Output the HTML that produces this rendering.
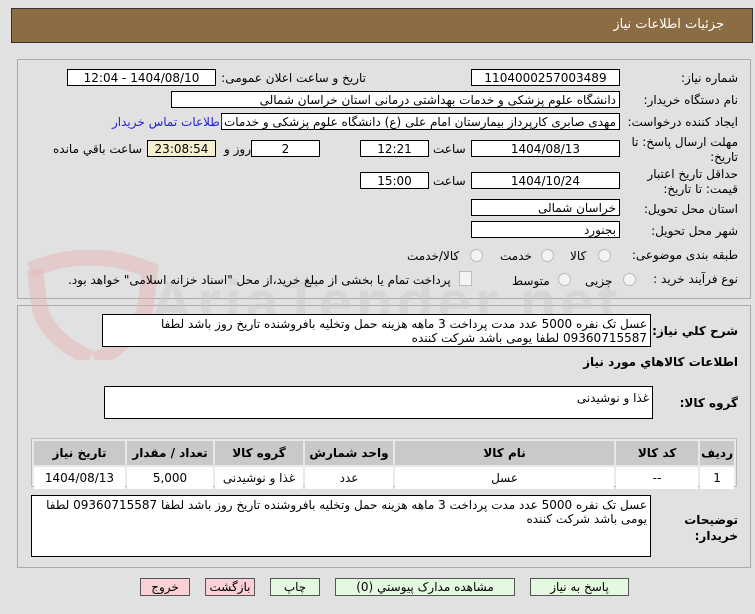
<!DOCTYPE html><html><head><meta charset="utf-8"><style>
body{margin:0;width:755px;height:614px;background:#e1e1e1;font-family:"DejaVu Sans","Liberation Sans",sans-serif;font-size:12px;color:#000;position:relative;overflow:hidden}
.a{position:absolute}
.f{position:absolute;background:#fff;border:1px solid #000;height:17px;line-height:17px;box-sizing:border-box;direction:rtl;padding:0 3px;white-space:nowrap;overflow:hidden}
.c{text-align:center}
.l{position:absolute;direction:rtl;white-space:nowrap}
.panel{position:absolute;border:1px solid #aaa;box-sizing:border-box}
.rad{position:absolute;width:11px;height:11px;border:1px solid #bbb;border-radius:50%;background:#f4f4f4}
table{border-collapse:separate;border-spacing:2px;direction:rtl}
td{text-align:center;height:20px;background:#fff}
th{background:#c9c9c9;height:22px;font-weight:bold}
.btn{position:absolute;height:18px;border:1px solid #555;box-sizing:border-box;text-align:center;line-height:16px;font-size:12px;direction:rtl}
</style></head><body>
<div class="a" style="left:11px;top:8px;width:742px;height:35px;background:#8c6c43;border:1px solid #333;box-sizing:border-box"></div>
<div class="l" style="right:31px;top:17px;color:#fff;font-size:13px">جزئیات اطلاعات نیاز</div>

<div class="panel" style="left:17px;top:59px;width:734px;height:240px"></div>
<div class="panel" style="left:17px;top:305px;width:734px;height:263px"></div>

<!-- watermark -->
<svg class="a" style="left:20px;top:250px" width="140" height="110" viewBox="0 0 140 110"><path d="M10 20 Q70 -5 130 20 L125 60 Q110 95 75 110" fill="none" stroke="#e6b5b5" stroke-width="16" opacity=".5"/><path d="M15 20 L20 60 Q30 90 70 108" fill="none" stroke="#e6b5b5" stroke-width="16" opacity=".5"/></svg>
<div class="a" style="left:150px;top:268px;font-size:60px;font-weight:bold;color:#c9c9c9;opacity:.45;letter-spacing:4px;font-family:'Liberation Sans',sans-serif;line-height:70px">AriaTender.net</div>

<div class="l" style="right:17px;top:71px">شماره نیاز:</div>
<div class="f c" style="left:471px;top:69px;width:149px">1104000257003489</div>
<div class="l" style="right:389px;top:71px">تاریخ و ساعت اعلان عمومی:</div>
<div class="f c" style="left:67px;top:69px;width:149px">1404/08/10 - 12:04</div>

<div class="l" style="right:17px;top:93px">نام دستگاه خریدار:</div>
<div class="f" style="left:171px;top:91px;width:449px">دانشگاه علوم پزشکی و خدمات بهداشتی درمانی استان خراسان شمالی</div>

<div class="l" style="right:17px;top:115px">ایجاد کننده درخواست:</div>
<div class="f" style="left:221px;top:113px;width:399px">مهدی صابری کارپرداز بیمارستان امام علی (ع) دانشگاه علوم پزشکی و خدمات بهداشتی</div>
<div class="l" style="left:112px;top:115px;color:#2323d0">اطلاعات تماس خریدار</div>

<div class="l" style="right:17px;top:135px;line-height:15px;text-align:right">مهلت ارسال پاسخ: تا<br>تاریخ:</div>
<div class="f c" style="left:471px;top:140px;width:149px">1404/08/13</div>
<div class="l" style="left:433px;top:142px">ساعت</div>
<div class="f c" style="left:360px;top:140px;width:69px">12:21</div>
<div class="f c" style="left:251px;top:140px;width:69px">2</div>
<div class="l" style="left:224px;top:142px">روز و</div>
<div class="f c" style="left:147px;top:140px;width:69px;background:#f5f0cf">23:08:54</div>
<div class="l" style="left:53px;top:142px">ساعت باقي مانده</div>

<div class="l" style="right:17px;top:167px;line-height:15px;text-align:right">حداقل تاریخ اعتبار<br>قیمت: تا تاریخ:</div>
<div class="f c" style="left:471px;top:172px;width:149px">1404/10/24</div>
<div class="l" style="left:433px;top:174px">ساعت</div>
<div class="f c" style="left:360px;top:172px;width:69px">15:00</div>

<div class="l" style="right:17px;top:202px">استان محل تحویل:</div>
<div class="f" style="left:471px;top:199px;width:149px">خراسان شمالی</div>
<div class="l" style="right:17px;top:224px">شهر محل تحویل:</div>
<div class="f" style="left:471px;top:221px;width:149px">بجنورد</div>

<div class="l" style="right:17px;top:248px">طبقه بندی موضوعی:</div>
<div class="rad" style="left:598px;top:249px"></div><div class="l" style="left:570px;top:249px">کالا</div>
<div class="rad" style="left:541px;top:249px"></div><div class="l" style="left:500px;top:249px">خدمت</div>
<div class="rad" style="left:470px;top:249px"></div><div class="l" style="left:407px;top:249px">کالا/خدمت</div>

<div class="l" style="right:17px;top:272px">نوع فرآیند خرید :</div>
<div class="rad" style="left:623px;top:273px"></div><div class="l" style="left:585px;top:274px">جزیی</div>
<div class="rad" style="left:558px;top:273px"></div><div class="l" style="left:512px;top:274px">متوسط</div>
<div class="a" style="left:459px;top:271px;width:11px;height:13px;border:1px solid #bbb;background:#f4f4f4"></div>
<div class="l" style="left:68px;top:273px">پرداخت تمام یا بخشی از مبلغ خرید،از محل "اسناد خزانه اسلامی" خواهد بود.</div>

<div class="l" style="right:17px;top:324px;font-weight:bold">شرح کلي نیاز:</div>
<div class="f" style="left:102px;top:314px;width:549px;height:33px;line-height:14px;white-space:normal;padding-top:2px">عسل تک نفره 5000 عدد مدت پرداخت 3 ماهه هزینه حمل وتخلیه بافروشنده تاریخ روز باشد لطفا 09360715587 لطفا یومی باشد شرکت کننده</div>

<div class="l" style="right:17px;top:355px;font-weight:bold">اطلاعات کالاهاي مورد نیاز</div>
<div class="l" style="right:17px;top:396px;font-weight:bold">گروه کالا:</div>
<div class="f" style="left:104px;top:386px;width:549px;height:33px;line-height:14px;padding-top:4px">غذا و نوشیدنی</div>

<div class="a" style="left:31px;top:438px;width:706px;height:49px;border:1px solid #bbb;box-sizing:border-box;background:#e8e8e8"></div>
<table class="a" style="left:32px;top:439px;width:704px">
<tr><th style="width:27px">ردیف</th><th style="width:80px">کد کالا</th><th>نام کالا</th><th style="width:86px">واحد شمارش</th><th style="width:86px">گروه کالا</th><th style="width:84px">تعداد / مقدار</th><th style="width:89px">تاریخ نیاز</th></tr>
<tr><td>1</td><td>--</td><td>عسل</td><td>عدد</td><td>غذا و نوشیدنی</td><td>5,000</td><td>1404/08/13</td></tr>
</table>

<div class="l" style="right:17px;top:512px;font-weight:bold;line-height:16px;text-align:right">توضیحات<br>خریدار:</div>
<div class="f" style="left:31px;top:495px;width:620px;height:62px;line-height:14px;white-space:normal;padding-top:2px">عسل تک نفره 5000 عدد مدت پرداخت 3 ماهه هزینه حمل وتخلیه بافروشنده تاریخ روز باشد لطفا 09360715587 لطفا یومی باشد شرکت کننده</div>

<div class="btn" style="left:140px;top:578px;width:50px;background:#f8d0d5">خروج</div>
<div class="btn" style="left:205px;top:578px;width:50px;background:#f8d0d5">بازگشت</div>
<div class="btn" style="left:270px;top:578px;width:50px;background:#e4fae0">چاپ</div>
<div class="btn" style="left:335px;top:578px;width:180px;background:#e4fae0">مشاهده مدارک پیوستي (0)</div>
<div class="btn" style="left:530px;top:578px;width:99px;background:#e4fae0">پاسخ به نیاز</div>
</body></html>
